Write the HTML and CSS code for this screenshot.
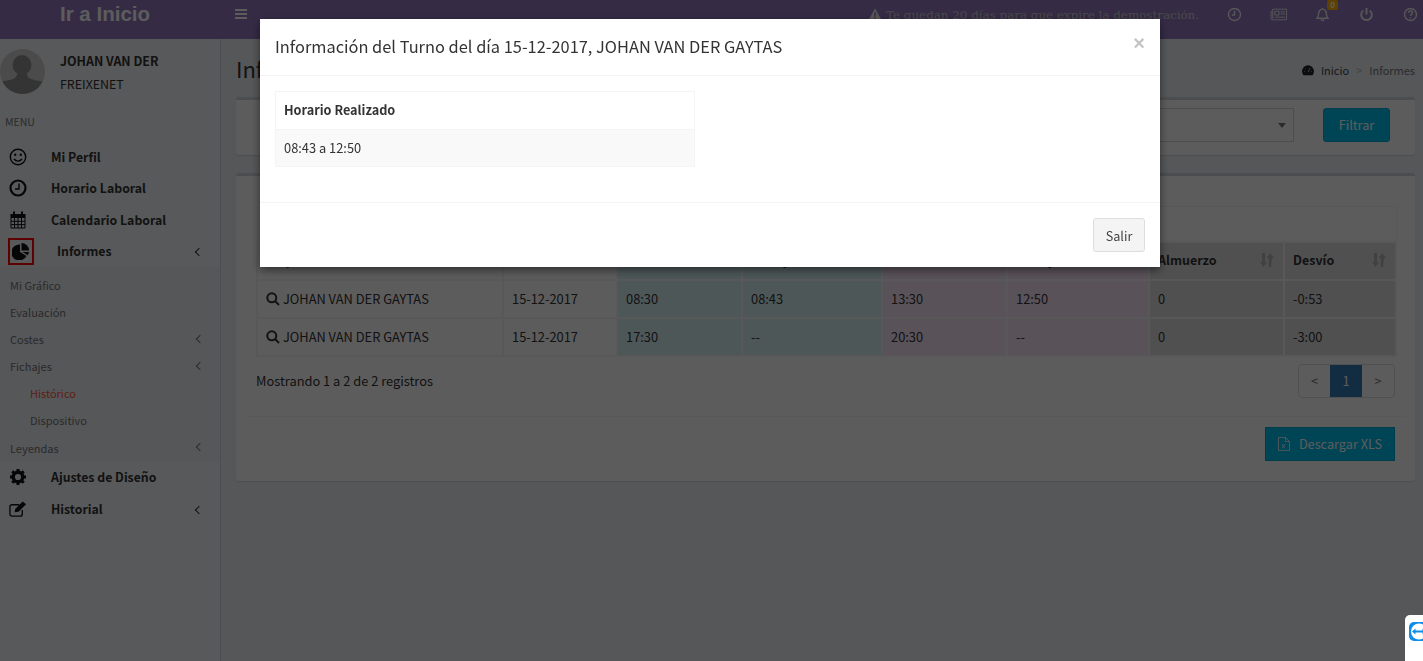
FILE: index.html
```html
<!DOCTYPE html>
<html lang="es">
<head>
    <meta charset="UTF-8">
    <meta name="viewport" content="width=device-width, initial-scale=1.0">
    <title>Informes</title>
    <link rel="stylesheet" href="styles.css">
</head>
<body>
    <header class="topbar">
        <a class="brand">Ir a Inicio</a>
        <svg class="bars" viewBox="0 0 12 10"><path d="M0 0h12v2H0zM0 4h12v2H0zM0 8h12v2H0z"/></svg>
        <div class="demo-note">
            <svg class="warn" viewBox="0 0 16 14"><path d="M8 0l8 14H0z"/><path class="warn-mark" d="M7 4.500h2l-.3 5H7.300zM7.200 10.500h1.600V12H7.200z"/></svg>
            <span>Te quedan 20 días para que expire la demostración.</span>
        </div>
        <nav class="top-icons">
            <span class="top-icon"><svg viewBox="0 0 14 14"><circle cx="7" cy="7" r="5.600"/><path d="M7 3.500V7.500H4.500"/></svg></span>
            <span class="top-icon"><svg class="wide" viewBox="0 0 16 12"><path d="M2.500 1h13v10H2a1 1 0 0 1-1-1V3h1.500zM2.500 3v7M4.500 3h4v3.500h-4zM10 3.500h4M10 5.500h4M4.500 8.500h9.500"/></svg></span>
            <span class="top-icon bell">
                <svg viewBox="0 0 14 14"><path d="M2 10.500c1.200-1.400 1.400-2.600 1.400-4.500S5 2 7 2s3.600 2 3.600 4 .2 3.100 1.400 4.500zM5.800 11.500a1.200 1.200 0 0 0 2.400 0M7 1v1"/></svg>
                <b class="badge">0</b>
            </span>
            <span class="top-icon"><svg viewBox="0 0 14 14"><path class="thick" d="M4 3.200a5 5 0 1 0 6 0M7 1v6"/></svg></span>
            <span class="top-icon"><svg viewBox="0 0 14 14"><circle cx="7" cy="7" r="5.600"/><path d="M5.200 5.400c0-2.300 3.700-2.300 3.700 0 0 1.500-1.900 1.400-1.900 3M7 9.600v1.200"/></svg></span>
        </nav>
    </header>

    <div class="layout">
        <aside class="sidebar">
            <div class="user-panel">
                <svg class="avatar" viewBox="0 0 45 45">
                    <rect class="avatar-bg" width="45" height="45"/>
                    <ellipse class="avatar-fg" cx="22" cy="16" rx="9.500" ry="10"/>
                    <path class="avatar-fg" d="M0 33c8-2 17-2 17-8h10c0 6 9 6 18 8v12H0z"/>
                </svg>
                <div class="user-info">
                    <strong>JOHAN VAN DER</strong>
                    <span>FREIXENET</span>
                </div>
            </div>
            <div class="menu-label">MENU</div>
            <ul class="menu">
                <li class="menu-item">
                    <svg class="menu-icon" viewBox="0 0 18 18"><circle cx="9" cy="9" r="7.700"/><circle class="fill" cx="6.200" cy="6.800" r="1.200"/><circle class="fill" cx="11.800" cy="6.800" r="1.200"/><path d="M5 11c2 2.800 6 2.800 8 0"/></svg>
                    <span>Mi Perfil</span>
                </li>
                <li class="menu-item">
                    <svg class="menu-icon" viewBox="0 0 18 18"><circle class="heavy" cx="9" cy="9" r="7.500"/><path d="M10 4.500V10H6"/></svg>
                    <span>Horario Laboral</span>
                </li>
                <li class="menu-item">
                    <svg class="menu-icon" viewBox="0 0 18 18"><path class="fill" d="M1.500 3H4V.500h2V3h6V.500h2V3h2.500v4h-15z"/><path class="cal-grid" d="M2 7v10h14V7M2 10.300h14M2 13.600h14M5.500 7v10M9 7v10M12.500 7v10"/></svg>
                    <span>Calendario Laboral</span>
                </li>
                <li class="menu-item menu-active">
                    <span class="icon-box"><svg viewBox="0 0 18 18"><path class="fill" d="M8 2.500V10l6.500 4A8 8 0 1 1 8 2.500z"/><path class="fill" d="M9.500 1a7.500 7.500 0 0 1 7.500 7.500H9.500z"/><path class="fill" d="M10.500 10H17a8 8 0 0 1-1.300 3.300z"/></svg></span>
                    <span>Informes</span>
                    <i class="chevron"></i>
                </li>
                <li>
                    <ul class="submenu">
                        <li>Mi Gráfico</li>
                        <li>Evaluación</li>
                        <li>Costes<i class="chevron small"></i></li>
                        <li>Fichajes<i class="chevron small"></i></li>
                        <li class="sub-2 current">Histórico</li>
                        <li class="sub-2">Dispositivo</li>
                        <li>Leyendas<i class="chevron small"></i></li>
                    </ul>
                </li>
                <li class="menu-item">
                    <svg class="menu-icon" viewBox="0 0 18 18"><circle class="gear" cx="9" cy="9" r="4.800"/><path class="gear-teeth" d="M9 1v3M9 14v3M1 9h3M14 9h3M3.300 3.300l2.200 2.200M12.500 12.500l2.200 2.200M3.300 14.700l2.200-2.200M12.500 5.500l2.200-2.200"/></svg>
                    <span>Ajustes de Diseño</span>
                </li>
                <li class="menu-item">
                    <svg class="menu-icon edit" viewBox="0 0 19 16"><path d="M14 9v4.500a2 2 0 0 1-2 2H3a2 2 0 0 1-2-2v-8a2 2 0 0 1 2-2h8"/><path class="fill" d="M6.500 8L14.500 0l3.500 3-8 8-4 .5z"/></svg>
                    <span>Historial</span>
                    <i class="chevron"></i>
                </li>
            </ul>
        </aside>

        <main class="content">
            <div class="content-head">
                <h1>Informes</h1>
                <div class="breadcrumb">
                    <svg class="gauge" viewBox="0 0 14 12"><path d="M7 0a7 7 0 0 1 6 10.500l-1 1H2l-1-1A7 7 0 0 1 7 0z"/><path class="gauge-mark" d="M7 8L9.500 3M2.500 7h1M10.500 7h1M4 3.500l.6.6"/></svg>
                    <span class="crumb-home">Inicio</span>
                    <span class="crumb-sep">&gt;</span>
                    <span>Informes</span>
                </div>
            </div>

            <section class="box filter-box">
                <div class="select-fake"><i class="caret"></i></div>
                <button class="btn-teal btn-filter">Filtrar</button>
            </section>

            <section class="box table-box">
                <table class="shifts">
                    <colgroup>
                        <col class="w-name"><col class="w-date"><col class="w-a"><col class="w-b"><col class="w-a"><col class="w-c"><col class="w-d"><col class="w-e">
                    </colgroup>
                    <thead>
                        <tr class="group-row"><th colspan="8"></th></tr>
                        <tr>
                            <th>Empleado</th>
                            <th>Fecha</th>
                            <th class="col-in">Entrada</th>
                            <th class="col-in">Fichaje</th>
                            <th class="col-out">Salida</th>
                            <th class="col-out">Fichaje</th>
                            <th class="col-gray">Almuerzo<svg class="sort" viewBox="0 0 14 14"><path d="M1 0h3v9h2l-3.500 5L-1 9h2zM10 14H7.800V5h-2l3.500-5 3.700 5h-2z"/></svg></th>
                            <th class="col-gray">Desvío<svg class="sort" viewBox="0 0 14 14"><path d="M1 0h3v9h2l-3.500 5L-1 9h2zM10 14H7.800V5h-2l3.500-5 3.700 5h-2z"/></svg></th>
                        </tr>
                    </thead>
                    <tbody>
                        <tr>
                            <td><svg class="search" viewBox="0 0 14 14"><circle cx="5.800" cy="5.800" r="4.500"/><path d="M9 9l4 4"/></svg> JOHAN VAN DER GAYTAS</td>
                            <td>15-12-2017</td>
                            <td class="col-in">08:30</td>
                            <td class="col-in">08:43</td>
                            <td class="col-out">13:30</td>
                            <td class="col-out">12:50</td>
                            <td class="col-gray">0</td>
                            <td class="col-gray">-0:53</td>
                        </tr>
                        <tr>
                            <td><svg class="search" viewBox="0 0 14 14"><circle cx="5.800" cy="5.800" r="4.500"/><path d="M9 9l4 4"/></svg> JOHAN VAN DER GAYTAS</td>
                            <td>15-12-2017</td>
                            <td class="col-in">17:30</td>
                            <td class="col-in">--</td>
                            <td class="col-out">20:30</td>
                            <td class="col-out">--</td>
                            <td class="col-gray">0</td>
                            <td class="col-gray">-3:00</td>
                        </tr>
                    </tbody>
                </table>
                <div class="table-foot">
                    <span>Mostrando 1 a 2 de 2 registros</span>
                    <div class="pagination">
                        <span>&lt;</span>
                        <span class="page-on">1</span>
                        <span>&gt;</span>
                    </div>
                </div>
                <div class="box-foot">
                    <button class="btn-teal btn-xls">
                        <svg viewBox="0 0 12 14"><path d="M.500.500h7l4 4v9H.500zM7.500.500v4h4"/><path d="M3.800 7l3.400 4.500M7.200 7l-3.400 4.500"/></svg>
                        Descargar XLS
                    </button>
                </div>
            </section>
        </main>
    </div>

    <div class="backdrop"></div>

    <div class="modal">
        <div class="modal-head">
            <h4>Información del Turno del día 15-12-2017, JOHAN VAN DER GAYTAS</h4>
            <span class="close">×</span>
        </div>
        <div class="modal-body">
            <table class="worked">
                <tr><th>Horario Realizado</th></tr>
                <tr><td>08:43 a 12:50</td></tr>
            </table>
        </div>
        <div class="modal-foot">
            <button class="btn-exit">Salir</button>
        </div>
    </div>

    <div class="remote-widget">
        <svg viewBox="0 0 18 26"><rect x="4" y="7" width="24" height="19" rx="5" fill="#0e8ee9"/><circle cx="14" cy="16.500" r="8" fill="#fff"/><path d="M7 16.500l3.500-3v2h7v-2l3.500 3-3.500 3v-2h-7v2z" fill="#0e8ee9"/></svg>
    </div>
</body>
</html>
```

FILE: styles.css
```css
* {
    margin: 0;
    padding: 0;
    box-sizing: border-box;
}

html, body {
    height: 100%;
    overflow: hidden;
}

body {
    font-family: "Noto Sans CJK JP", "Lato", sans-serif;
    font-size: 12.850px;
    line-height: 20px;
    color: #333;
    background: #ecf0f5;
    display: flex;
    flex-direction: column;
}

ul {
    list-style: none;
}

svg {
    fill: none;
    stroke: currentColor;
}

/* top bar */
.topbar {
    height: 39px;
    flex: none;
    background: #9478c0;
    color: #fff;
    display: flex;
    align-items: center;
}

.brand {
    width: 235px;
    flex: none;
    padding-left: 60px;
    font-family: "Liberation Sans", Arial, sans-serif;
    font-weight: bold;
    font-size: 20.500px;
    margin-top: -11px;
    color: #fff;
}

.bars {
    width: 12px;
    height: 10px;
    flex: none;
    fill: #fff;
    stroke: none;
    margin-top: -11px;
}

.demo-note {
    margin-left: 621px;
    margin-top: -10px;
    width: 330px;
    flex: none;
    font-family: "DejaVu Serif", serif;
    font-size: 11.900px;
    white-space: nowrap;
    color: #ccc;
    display: flex;
    align-items: center;
    gap: 4px;
}

.warn {
    flex: none;
    width: 14px;
    height: 13px;
    fill: #eee;
    stroke: none;
}

.warn-mark {
    fill: #9478c0;
}

.top-icons {
    display: flex;
    align-items: center;
    margin-top: -11px;
    margin-left: 14px;
}

.top-icon {
    width: 44px;
    height: 15px;
    display: flex;
    justify-content: center;
    position: relative;
}

.top-icon svg {
    width: 15px;
    height: 15px;
    stroke-width: 1.300;
    color: #eee;
}

.top-icon .wide {
    width: 17px;
    stroke-width: 0.900;
}

.top-icon .thick {
    stroke-width: 1.800;
}

.badge {
    position: absolute;
    left: 27px;
    top: -7px;
    width: 11px;
    height: 10px;
    background: #ffb400;
    border-radius: 2px;
    font-size: 8px;
    text-align: center;
    line-height: 10px;
    color: #fff;
}

/* layout */
.layout {
    flex: 1;
    display: flex;
    min-height: 0;
}

.sidebar {
    width: 221px;
    flex: none;
    background: #f4f6f8;
    border-right: 1px solid #d2d6de;
    padding-top: 10px;
}

.user-panel {
    display: flex;
    gap: 15px;
    height: 45px;
}

.avatar {
    width: 45px;
    height: 45px;
    stroke: none;
    border-radius: 50%;
}

.avatar-bg {
    fill: #d0d0d0;
}

.avatar-fg {
    fill: #909090;
}

.user-info {
    display: flex;
    flex-direction: column;
    gap: 3px;
    font-size: 12.400px;
    padding-top: 2px;
}

.user-info strong {
    font-weight: bold;
}

.menu-label {
    font-size: 10.500px;
    color: #777;
    padding: 18px 0 0 5px;
    height: 47px;
}

.menu-item {
    display: flex;
    align-items: center;
    height: 31.500px;
    padding-left: 9px;
    font-weight: bold;
    font-size: 12.300px;
    color: #333;
    position: relative;
}

.menu-item > span:not(.icon-box) {
    margin-left: 24px;
}

.menu-active > span:not(.icon-box) {
    margin-left: 23px;
}

.menu-icon {
    width: 18px;
    height: 18px;
    stroke: #111;
    stroke-width: 1.400;
    flex: none;
}

.menu-icon.edit {
    height: 16px;
}

.menu-icon .fill,
.icon-box .fill {
    fill: #111;
    stroke: none;
}

.menu-icon .heavy {
    stroke-width: 2.200;
}

.menu-icon .cal-grid {
    stroke-width: 1;
}

.menu-icon .gear {
    stroke-width: 3.400;
}

.menu-icon .gear-teeth {
    stroke-width: 3;
}

.icon-box {
    width: 26px;
    height: 27px;
    margin-left: -1px;
    border: 2px solid #f00;
    display: flex;
    align-items: center;
    justify-content: center;
}

.icon-box svg {
    width: 18px;
    height: 18px;
    stroke: none;
}

.chevron {
    position: absolute;
    right: 18px;
    top: 50%;
    width: 6px;
    height: 6px;
    margin-top: -2px;
    border-left: 1.500px solid #333;
    border-bottom: 1.500px solid #333;
    transform: rotate(45deg);
}

.chevron.small {
    right: 17px;
    margin-top: -4px;
    border-left-width: 1px;
    border-bottom-width: 1px;
    border-color: #777;
}

.submenu {
    background: #ecf0f5;
    padding-top: 5px;
    font-size: 11px;
    color: #777;
}

.submenu li {
    position: relative;
    height: 27.100px;
    line-height: 26px;
    padding-left: 10px;
}

.submenu .sub-2 {
    padding-left: 30px;
}

.submenu .current {
    color: #ff5a36;
}

/* main */
.content {
    flex: 1;
    min-width: 0;
    padding: 0 8px 0 15px;
}

.content-head {
    display: flex;
    justify-content: space-between;
    height: 58px;
    padding-top: 14px;
}

.content-head h1 {
    font-size: 22px;
    line-height: 30px;
    font-weight: normal;
}

.breadcrumb {
    display: flex;
    align-items: center;
    gap: 7px;
    height: 34px;
    font-size: 11px;
    color: #777;
}

.gauge {
    width: 12px;
    height: 11px;
    fill: #222;
    stroke: none;
}

.gauge-mark {
    stroke: #eee;
    fill: none;
    stroke-width: 0.800;
}

.crumb-home {
    color: #444;
}

.crumb-sep {
    color: #bbb;
}

.box {
    background: #fff;
    border-top: 3px solid #d2d6de;
    border-radius: 3px;
    box-shadow: 0 1px 1px rgba(0, 0, 0, 0.1);
}

.filter-box {
    height: 58px;
    padding-top: 8px;
    display: flex;
    justify-content: flex-end;
    gap: 29px;
    padding-right: 25px;
}

.select-fake {
    width: 400px;
    height: 34px;
    border: 1px solid #d2d6de;
    position: relative;
}

.caret {
    position: absolute;
    right: 7px;
    top: 14px;
    border: 4px solid transparent;
    border-top: 5px solid #777;
    border-bottom: none;
}

.btn-teal {
    background: #00c0ef;
    color: #fff;
    border: 1px solid #00acd6;
    font-family: inherit;
    font-size: 12.700px;
}

.btn-filter {
    width: 67px;
    height: 34px;
    border-radius: 3px;
    padding-bottom: 1px;
}

.table-box {
    margin-top: 18px;
    height: 308px;
    padding: 30px 20px 0;
}

.shifts {
    width: 1139px;
    border-collapse: collapse;
    table-layout: fixed;
}

.w-name { width: 246px; }
.w-date { width: 114px; }
.w-a { width: 125px; }
.w-b { width: 140px; }
.w-c { width: 142px; }
.w-d { width: 135px; }
.w-e { width: 112px; }

.shifts th,
.shifts td {
    border: 2px solid #f4f4f4;
    height: 38px;
    padding: 0 8px;
    text-align: left;
    white-space: nowrap;
}

.shifts th {
    position: relative;
    font-size: 12.500px;
    padding-bottom: 2px;
}

.shifts .group-row th {
    height: 35px;
    border: 1px solid #f4f4f4;
}

.shifts .col-in {
    background: #d6f1f4;
}

.shifts .col-out {
    background: #f7e4f7;
}

.shifts .col-gray {
    background: #dedede;
}

.sort {
    position: absolute;
    right: 8px;
    top: 10px;
    width: 14px;
    height: 14px;
    fill: #b5b5b5;
    stroke: none;
}

.search {
    width: 14px;
    height: 14px;
    stroke: #333;
    stroke-width: 2;
    vertical-align: -2px;
}

.table-foot {
    display: flex;
    justify-content: space-between;
    align-items: center;
    margin-top: 7px;
    height: 34px;
}

.pagination {
    display: flex;
    height: 34px;
    border: 1px solid #ddd;
    border-radius: 4px;
    overflow: hidden;
    color: #777;
}

.pagination span {
    width: 32px;
    display: flex;
    align-items: center;
    justify-content: center;
}

.pagination span:first-child {
    width: 31px;
}

.page-on {
    background: #337ab7;
    color: #fff;
}

.box-foot {
    margin: 18px -10px 0;
    border-top: 1px solid #f4f4f4;
    padding: 10px 10px 0;
    display: flex;
    justify-content: flex-end;
}

.btn-xls {
    width: 130px;
    height: 34px;
    display: flex;
    align-items: center;
    justify-content: center;
    gap: 9px;
}

.btn-xls svg {
    width: 12px;
    height: 14px;
    stroke-width: 0.800;
}

/* modal */
.backdrop {
    position: fixed;
    inset: 0;
    background: #000;
    opacity: 0.64;
}

.modal {
    position: fixed;
    left: 260px;
    top: 19px;
    width: 900px;
    background: #fff;
    box-shadow: 0 3px 9px rgba(0, 0, 0, 0.5);
}

.modal-head {
    display: flex;
    justify-content: space-between;
    height: 57px;
    padding: 15px;
    border-bottom: 1px solid #f4f4f4;
}

.modal-head h4 {
    font-size: 16.400px;
    font-weight: normal;
    line-height: 24px;
}

.close {
    font-family: "Liberation Sans", Arial, sans-serif;
    font-size: 20px;
    font-weight: bold;
    color: #c4c4c4;
    line-height: 18px;
}

.modal-body {
    padding: 15px;
    height: 126px;
}

.worked {
    width: 420px;
    border-collapse: collapse;
}

.worked th,
.worked td {
    border: 1px solid #f4f4f4;
    height: 37.500px;
    padding: 0 8px;
    text-align: left;
}

.worked th {
    font-size: 12.700px;
}

.worked td {
    background: #f9f9f9;
}

.modal-foot {
    height: 65px;
    padding: 15px;
    border-top: 1px solid #f4f4f4;
    display: flex;
    justify-content: flex-end;
}

.btn-exit {
    width: 52px;
    height: 34px;
    background: #f4f4f4;
    border: 1px solid #ddd;
    border-radius: 3px;
    font-family: inherit;
    font-size: 12.700px;
    color: #444;
}

/* remote support tab */
.remote-widget {
    position: fixed;
    right: 0;
    bottom: 0;
    width: 18px;
    height: 46px;
    background: #fff;
    border-radius: 5px 0 0 0;
}

.remote-widget svg {
    display: block;
    width: 18px;
    height: 26px;
    stroke: none;
}
```
